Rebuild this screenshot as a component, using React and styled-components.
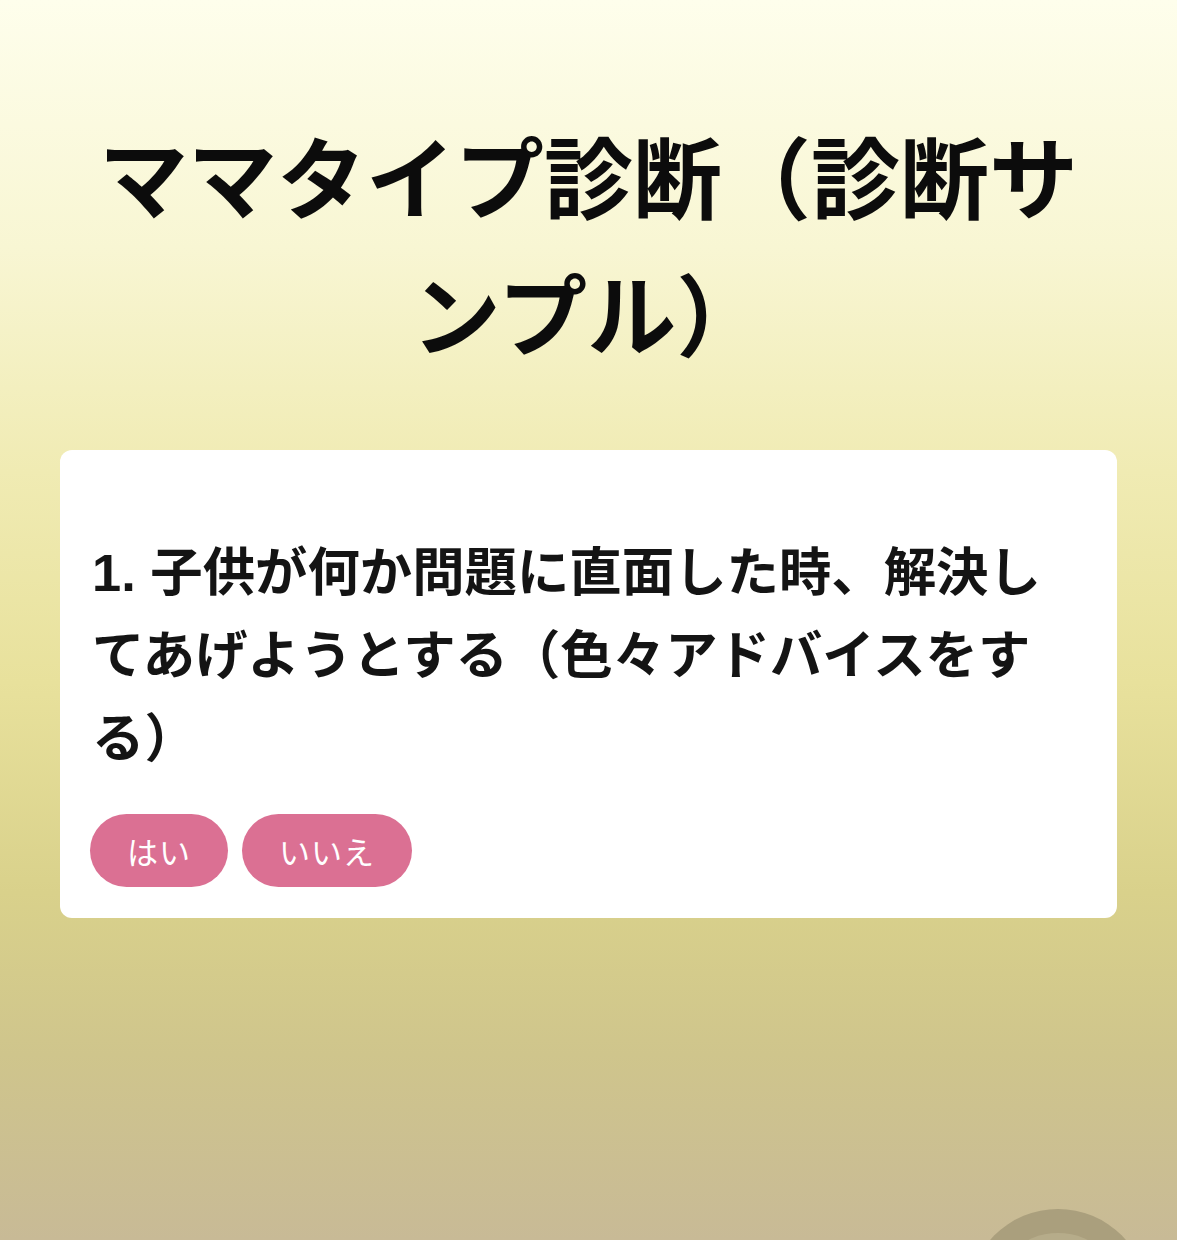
import styled, { createGlobalStyle } from 'styled-components';

const GlobalStyle = createGlobalStyle`
    * {
        box-sizing: border-box;
    }

    body {
        margin: 0;
        font-family: "Liberation Sans", "Noto Sans CJK JP", sans-serif;
        color: #111;
    }
`;

const Page = styled.div`
    min-height: 100vh;
    padding: 113px 60px 60px;
    background: linear-gradient(
        to bottom,
        #fefeec 0%,
        #f8f6d3 20%,
        #f0ebb3 38%,
        #e8e19c 55%,
        #d9d18b 72%,
        #cfc58c 85%,
        #c8ba96 100%
    );
`;

const Title = styled.h1`
    max-width: 1000px;
    margin: 0 auto 63px;
    text-align: center;
    font-size: 89px;
    line-height: 137px;
    font-weight: bold;
    color: #0c0c0c;
`;

const Card = styled.section`
    background: #fff;
    border-radius: 12px;
    padding: 82px 30px 31px;
`;

const Question = styled.h2`
    max-width: 972px;
    margin: 0 0 33px;
    padding-left: 2px;
    font-size: 52.4px;
    line-height: 83px;
    font-weight: bold;
    color: #141414;
`;

const Answers = styled.div`
    display: flex;
    gap: 14px;
`;

const AnswerButton = styled.button`
    height: 73px;
    padding: 0 37px;
    border: none;
    border-radius: 37px;
    background: #db7093;
    color: #fff;
    font-family: "Noto Sans CJK JP", sans-serif;
    font-size: 31px;
    letter-spacing: 1px;
    cursor: pointer;
`;

const FloatingButton = styled.button`
    position: fixed;
    left: 968px;
    top: 1209px;
    width: 180px;
    height: 180px;
    border: none;
    border-radius: 50%;
    background: #aa9f7d;
    display: flex;
    justify-content: center;
    padding-top: 24px;
`;

const FloatingInner = styled.span`
    width: 136px;
    height: 136px;
    border-radius: 50%;
    background: #b6ac8a;
`;

const App = () => {
    return (
        <Page>
            <GlobalStyle />
            <Title>ママタイプ診断（診断サンプル）</Title>
            <Card>
                <Question>1. 子供が何か問題に直面した時、解決してあげようとする（色々アドバイスをする）</Question>
                <Answers>
                    <AnswerButton>はい</AnswerButton>
                    <AnswerButton>いいえ</AnswerButton>
                </Answers>
            </Card>
            <FloatingButton aria-label="menu">
                <FloatingInner />
            </FloatingButton>
        </Page>
    );
};

export default App;
